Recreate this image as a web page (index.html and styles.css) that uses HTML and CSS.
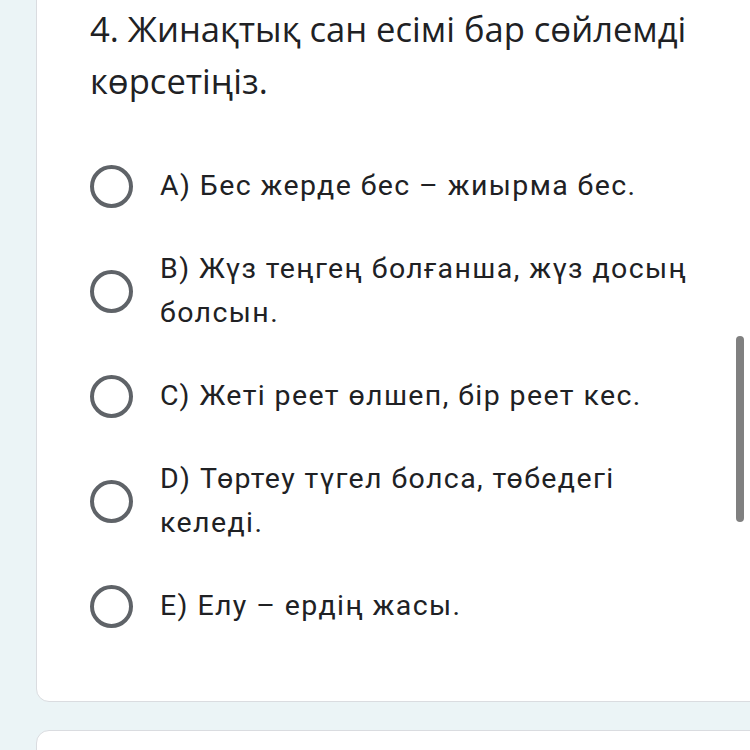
FILE: index.html
```html
<!DOCTYPE html>
<html lang="kk">
<head>
<meta charset="utf-8">
<link rel="stylesheet" href="styles.css">
</head>
<body>
<div class="page">
  <section class="card">
    <h1 class="title">4. Жинақтық сан есімі бар сөйлемді көрсетіңіз.</h1>
    <div class="options">
      <label class="option"><span class="radio"></span><span class="text">A) Бес жерде бес – жиырма бес.</span></label>
      <label class="option"><span class="radio"></span><span class="text">B) Жүз теңгең болғанша, жүз досың болсын.</span></label>
      <label class="option"><span class="radio"></span><span class="text">C) Жеті реет өлшеп, бір реет кес.</span></label>
      <label class="option"><span class="radio"></span><span class="text">D) Төртеу түгел болса, төбедегі келеді.</span></label>
      <label class="option"><span class="radio"></span><span class="text">E) Елу – ердің жасы.</span></label>
    </div>
  </section>
  <section class="card next"></section>
</div>
<div class="scrollbar"></div>
</body>
</html>
```

FILE: styles.css
```css
html, body {
  margin: 0;
  padding: 0;
  height: 100%;
  overflow: hidden;
}
body {
  background: #ebf4f6;
  color: #202124;
}
.page {
  display: flex;
  flex-direction: column;
  gap: 28px;
  margin-top: -20px;
}
.card {
  background: #ffffff;
  border: 1px solid #dadce0;
  border-radius: 13px;
  margin-left: 36px;
  margin-right: -30px;
  padding: 22px 0 73px 53px;
}
.card.next {
  height: 200px;
  padding: 0;
}
.title {
  margin: 0;
  font-family: "Open Sans", sans-serif;
  font-weight: 400;
  font-size: 34.6px;
  line-height: 52px;
  width: 630px;
  letter-spacing: 0;
}
.options {
  display: flex;
  flex-direction: column;
  gap: 39px;
  margin-top: 57px;
}
.option {
  display: flex;
  align-items: center;
  gap: 27px;
}
.radio {
  flex: none;
  width: 43px;
  height: 43px;
  box-sizing: border-box;
  border: 4.5px solid #5f6368;
  border-radius: 50%;
}
.text {
  font-family: Roboto, sans-serif;
  font-size: 28.5px;
  letter-spacing: 1.4px;
  line-height: 44px;
  width: 546px;
}
.scrollbar {
  position: fixed;
  left: 736px;
  top: 336px;
  width: 8px;
  height: 186px;
  border-radius: 4px;
  background: #808080;
}
```
